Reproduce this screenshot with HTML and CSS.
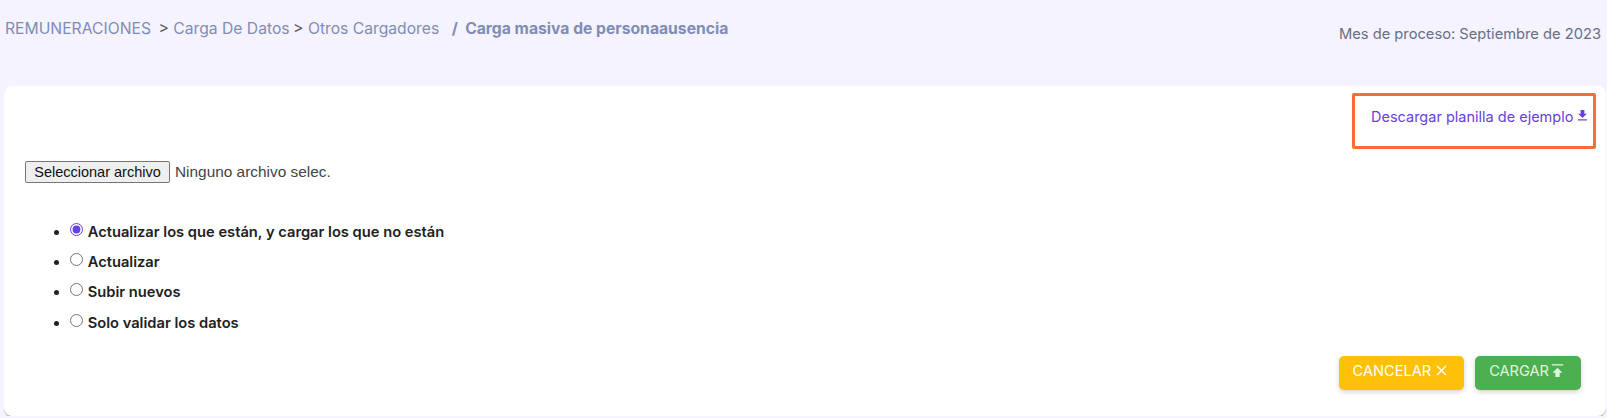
FILE: index.html
```html
<!DOCTYPE html>
<html lang="es">
<head>
  <meta charset="UTF-8">
  <title>Carga masiva de personaausencia</title>
  <link rel="stylesheet" href="styles.css">
</head>
<body>
  <div class="top-bar">
    <div class="breadcrumb">
      <span>REMUNERACIONES</span>
      <span class="sep first">&gt;</span>
      <span>Carga De Datos</span>
      <span class="sep">&gt;</span>
      <span>Otros Cargadores</span>
      <span class="current">/ &nbsp;Carga masiva de personaausencia</span>
    </div>
    <div class="process-month">Mes de proceso: Septiembre de 2023</div>
  </div>

  <div class="card">
    <div class="download-row">
      <a class="download-link" href="#">Descargar planilla de ejemplo
        <svg class="icon-small" viewBox="0 0 24 24"><path d="M19 9h-4V3H9v6H5l7 7 7-7zM5 18v2h14v-2H5z"/></svg>
      </a>
    </div>

    <form>
      <div class="file-row">
        <button type="button" class="file-button">Seleccionar archivo</button>
        <span class="file-name">Ninguno archivo selec.</span>
      </div>
      <ul class="options">
        <li><label><input type="radio" name="mode" checked> Actualizar los que están, y cargar los que no están</label></li>
        <li><label><input type="radio" name="mode"> Actualizar</label></li>
        <li><label><input type="radio" name="mode"> Subir nuevos</label></li>
        <li><label><input type="radio" name="mode"> Solo validar los datos</label></li>
      </ul>
      <div class="actions">
        <button type="button" class="btn btn-cancel">CANCELAR
          <svg class="icon" viewBox="0 0 24 24"><path d="M19 6.41 17.59 5 12 10.59 6.41 5 5 6.41 10.59 12 5 17.59 6.41 19 12 13.41 17.59 19 19 17.59 13.41 12z"/></svg>
        </button>
        <button type="button" class="btn btn-load">CARGAR
          <svg class="icon" viewBox="0 0 24 24"><path d="M4 3h16v2H4zM5 15h4v6h6v-6h4l-7-7z"/></svg>
        </button>
      </div>
    </form>
  </div>
</body>
</html>
```

FILE: styles.css
```css
body {
  margin: 0;
  background-color: #f5f3ff;
  font-family: Inter, "Liberation Sans", sans-serif;
  font-size: 14.5px;
  color: #212121;
}

.top-bar {
  display: flex;
  justify-content: space-between;
  height: 86px;
  padding: 0 6px 0 5px;
  box-sizing: border-box;
}

.breadcrumb {
  padding-top: 19px;
  color: #7f8db5;
  font-size: 15.7px;
  line-height: 19px;
}

.sep {
  margin-left: -1px;
  color: #555;
}

.sep.first {
  margin-left: 3px;
}

.current {
  margin-left: 8px;
  font-weight: 700;
}

.process-month {
  padding-top: 25px;
  color: #667085;
  font-size: 14.7px;
  line-height: 18px;
}

.card {
  height: 330px;
  margin: 0 1px 0 4px;
  padding: 0 20px;
  background-color: #fff;
  border-radius: 8px;
  box-shadow: 0 1px 0 #a9a9b5;
  box-sizing: border-box;
  position: relative;
}

.download-row {
  display: flex;
  justify-content: flex-end;
  margin-right: -10px;
  padding-top: 7px;
}

.download-link {
  display: flex;
  align-items: center;
  width: 244px;
  height: 56px;
  padding: 0 0 10px 16px;
  border: 3px solid #ff6a39;
  border-radius: 2px;
  box-sizing: border-box;
  color: #6741e0;
  text-decoration: none;
}

.icon-small {
  width: 15px;
  height: 15px;
  margin-left: 2px;
  margin-bottom: 1px;
  fill: currentColor;
}

.file-row {
  display: flex;
  align-items: center;
  gap: 5px;
  margin: 12px 0 0 1px;
  font-family: "Liberation Sans", Arial, sans-serif;
  font-size: 15.4px;
  color: #444;
}

.file-button {
  height: 22px;
  width: 145px;
  padding: 0;
  border: 1px solid #767676;
  border-radius: 2px;
  background-color: #efefef;
  color: #111;
  font-family: inherit;
  font-size: 14.5px;
}

.options {
  margin: 33.5px 0 0;
  padding-left: 46px;
  font-size: 14.7px;
  font-weight: 600;
}

.options li {
  height: 30.4px;
  line-height: 30.4px;
}

.options input {
  margin: 0 1px 0 0;
  accent-color: #6741e0;
  vertical-align: 1px;
}

.actions {
  display: flex;
  justify-content: flex-end;
  gap: 11px;
  position: absolute;
  right: 25px;
  bottom: 26px;
}

.btn {
  display: flex;
  align-items: center;
  height: 34px;
  padding: 0 15px 4px 14px;
  border: none;
  border-radius: 5px;
  color: #fff;
  font-family: inherit;
  font-size: 14.6px;
  box-shadow: 0 2px 5px rgba(0, 0, 0, 0.18);
}

.btn-cancel {
  padding-right: 14px;
  background-color: #ffc107;
}

.btn-load {
  background-color: #4caf50;
  color: #e2f5e0;
}

.icon {
  width: 17px;
  height: 17px;
  margin-bottom: 2px;
  fill: currentColor;
}

.btn-cancel .icon {
  margin-left: 2px;
}
```
